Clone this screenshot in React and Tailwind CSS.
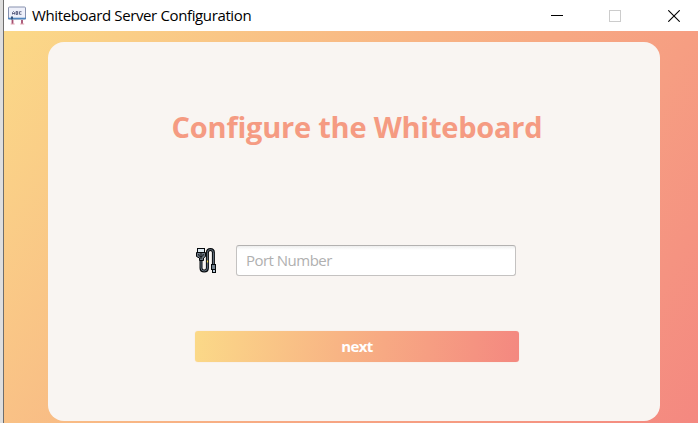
function BoardIcon() {
  return (
    <svg width="20" height="20" viewBox="0 0 20 20" className="shrink-0" fill="none">
      <path d="M5.5 14v4M15 14v4" stroke="#a54f70" strokeWidth="1.8" />
      <path d="M3.7 18h4M13.2 18h4" stroke="#e0a5b0" strokeWidth="1" />
      <rect x="1.5" y="1" width="17" height="12" rx="1" fill="#eef0fa" stroke="#8791ae" />
      <path d="M1 12.500h18" stroke="#4f86c0" strokeWidth="1.6" />
      <path d="M5 10.5v3" stroke="#36547e" strokeWidth="2" />
      <path d="M5.500 8.500v-2l1-1 1 1v2M5.500 7.500h2M9 8.500v-3h1.700v3zM9 7h2M14.500 5.700h-2v2.600h2" stroke="#484d72" strokeWidth="0.8" />
    </svg>
  );
}

function CableIcon() {
  return (
    <svg width="20" height="25" viewBox="0 0 20 25" className="shrink-0" fill="none">
      <path d="M5 11v9q0 3 3.2 3t3.2-3V4.500q0-3 3-3t3 3V17" stroke="#05080b" strokeWidth="3" />
      <path d="M5 11v9q0 3 3.200 3t3.200-3V4.500q0-3 3-3t3 3V17" stroke="#667482" strokeWidth="1" />
      <path d="M.5 4.500h9v4l-2 1.500v2.500h-4V10l-3-1.500z" fill="#6d7985" stroke="#05080b" />
      <rect x="1.500" y=".5" width="7" height="4" fill="#dae6ef" stroke="#05080b" />
      <path d="M5 5v6M2.800 6v1.500L5 9M7.200 6v1.500L5 9" stroke="#05080b" strokeWidth=".9" />
      <rect x="15.500" y="16.500" width="4" height="5" fill="#73808c" stroke="#05080b" />
      <rect x="16.500" y="21.500" width="3" height="3" fill="#b8c8d5" stroke="#05080b" />
      <path d="M10.900 12.500h1.200v2h-1.200z" fill="#f1d64c" />
    </svg>
  );
}

function TitleBar() {
  return (
    <header className="flex h-[31px] shrink-0 items-center bg-white pl-[3px]">
      <BoardIcon />
      <span className="mb-0.5 ml-[5px] w-[230px] whitespace-nowrap text-[15px] leading-5 tracking-[-0.37px] text-black">
        Whiteboard Server Configuration
      </span>
      <div className="ml-auto flex items-center pr-[18px]">
        <svg width="12" height="12" className="mr-[46px]">
          <path d="M0 5.500h12" stroke="#000" />
        </svg>
        <svg width="12" height="12" className="mr-[47px]" fill="none">
          <rect x="0.5" y="0.5" width="11" height="11" stroke="#ccc" />
        </svg>
        <svg width="12" height="12">
          <path d="M.3.3l11.4 11.4M11.7.3L.3 11.7" stroke="#000" strokeWidth="1.1" />
        </svg>
      </div>
    </header>
  );
}

export default function App() {
  return (
    <div className="flex h-[423px] w-[698px] overflow-hidden font-['Open_Sans','Noto_Sans',sans-serif]">
      <div className="w-1 shrink-0 border-r border-[#6e6e6e] bg-[#dedede]" />
      <div className="flex min-w-0 flex-1 flex-col">
        <TitleBar />
        <main className="flex-1 bg-[linear-gradient(125deg,#fbd988,#f7a983_57%,#f48880)] pt-[11px] pl-11">
          <section className="flex h-[379px] w-[612px] flex-col rounded-2xl bg-[#f9f5f2] pt-[65px]">
            <h1 className="ml-[6px] h-10 text-center text-[29px] leading-10 font-bold tracking-[-0.22px] whitespace-nowrap text-[#f59b82]">
              Configure the Whiteboard
            </h1>
            <div className="mt-[98px] ml-[148px] flex h-[31px] items-center">
              <CableIcon />
              <input
                className="ml-5 h-[31px] w-[280px] rounded-[3px] border border-[#c4c2c1] border-t-[#b3b1b0] bg-[linear-gradient(#eee,#fff_4px)] px-[9px] pb-0.5 text-[15px] tracking-[-0.52px] placeholder:text-[#b0b0b0]"
                placeholder="Port Number"
              />
            </div>
            <button className="mt-[55px] ml-[147px] h-[31px] w-[324px] rounded-[3px] bg-[linear-gradient(95.5deg,#fbd988,#f7a983_58%,#f48880)] pb-0.5 text-[15px] leading-5 font-bold tracking-[-0.6px] text-white shadow-[0_0_1px_#f5cdb8]">
              next
            </button>
          </section>
        </main>
      </div>
    </div>
  );
}
